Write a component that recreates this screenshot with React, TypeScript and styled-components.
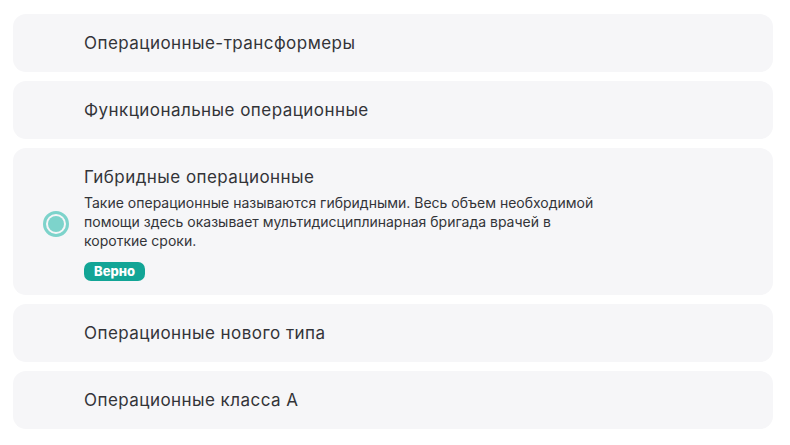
import React from "react";
import styled, { createGlobalStyle } from "styled-components";

const GlobalStyle = createGlobalStyle`
  body {
    margin: 0;
    background: #ffffff;
    font-family: Inter, "Noto Sans", sans-serif;
  }
`;

const List = styled.div`
  display: flex;
  flex-direction: column;
  gap: 9px;
  width: 760px;
  padding: 14px 0 0 13px;
`;

const Card = styled.div<{ $open?: boolean }>`
  display: flex;
  align-items: center;
  background: #f6f6f8;
  border-radius: 13px;
  min-height: 58px;
  padding: ${(p) => (p.$open ? "19px 0 14px 0" : "0")};
  box-sizing: border-box;
`;

const RadioSlot = styled.div`
  width: 71px;
  flex: none;
  box-sizing: border-box;
  display: flex;
  padding-left: 30px;
`;

const Radio = styled.span`
  width: 26px;
  height: 26px;
  box-sizing: border-box;
  border-radius: 50%;
  border: 3px solid #7dd3cb;
  padding: 2px;
  display: flex;

  &::after {
    content: "";
    flex: 1;
    border-radius: 50%;
    background: #7dd3cb;
  }
`;

const Body = styled.div`
  display: flex;
  flex-direction: column;
  align-items: flex-start;
`;

const Title = styled.div`
  font-size: 17px;
  color: #333438;
  letter-spacing: 0.45px;
`;

const Text = styled.p`
  margin: 6px 0 0;
  max-width: 515px;
  font-size: 14px;
  line-height: 19px;
  color: #333438;
`;

const Badge = styled.span`
  margin-top: 12px;
  padding: 0 10px;
  height: 19px;
  line-height: 19px;
  border-radius: 7px;
  background: #12a596;
  color: #ffffff;
  font-size: 13px;
  font-weight: 800;
`;

const options = [
  "Операционные-трансформеры",
  "Функциональные операционные",
  "Гибридные операционные",
  "Операционные нового типа",
  "Операционные класса А",
];

export default function App() {
  const selected = 2;
  return (
    <>
      <GlobalStyle />
      <List>
        {options.map((name, i) => (
          <Card key={name} $open={i === selected}>
            <RadioSlot>{i === selected && <Radio />}</RadioSlot>
            <Body>
              <Title>{name}</Title>
              {i === selected && (
                <>
                  <Text>
                    Такие операционные называются гибридными. Весь объем необходимой
                    помощи здесь оказывает мультидисциплинарная бригада врачей в
                    короткие сроки.
                  </Text>
                  <Badge>Верно</Badge>
                </>
              )}
            </Body>
          </Card>
        ))}
      </List>
    </>
  );
}
